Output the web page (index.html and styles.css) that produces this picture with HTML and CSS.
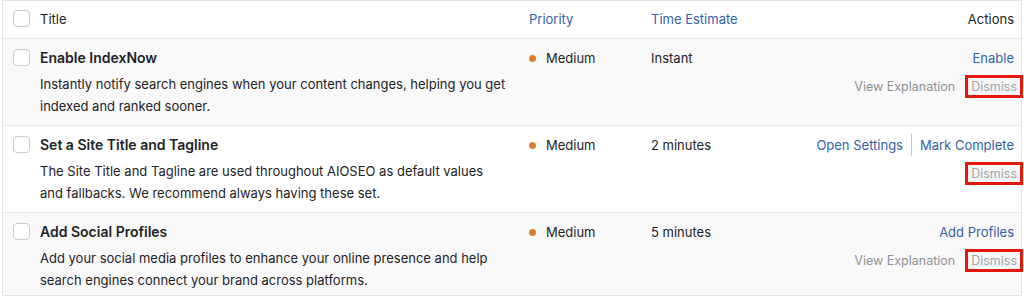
FILE: index.html
```html
<!DOCTYPE html>
<html>
<head>
<meta charset="utf-8">
<link rel="stylesheet" href="styles.css">
</head>
<body>
<div class="table">
  <div class="row head">
    <div class="c-check"><span class="cb"></span></div>
    <div class="c-title">Title</div>
    <div class="c-prio link">Priority</div>
    <div class="c-time link">Time Estimate</div>
    <div class="c-act">Actions</div>
  </div>

  <div class="row alt">
    <div class="c-check"><span class="cb"></span></div>
    <div class="c-title">
      <div class="t">Enable IndexNow</div>
      <div class="d">Instantly notify search engines when your content changes, helping you get indexed and ranked sooner.</div>
    </div>
    <div class="c-prio"><span class="dot"></span>Medium</div>
    <div class="c-time">Instant</div>
    <div class="c-act">
      <div class="a1"><span class="link">Enable</span></div>
      <div class="a2"><span class="muted">View Explanation</span><span class="dismiss">Dismiss</span></div>
    </div>
  </div>

  <div class="row">
    <div class="c-check"><span class="cb"></span></div>
    <div class="c-title">
      <div class="t">Set a Site Title and Tagline</div>
      <div class="d">The Site Title and Tagline are used throughout AIOSEO as default values and fallbacks. We recommend always having these set.</div>
    </div>
    <div class="c-prio"><span class="dot"></span>Medium</div>
    <div class="c-time">2 minutes</div>
    <div class="c-act">
      <div class="a1"><span class="link">Open Settings</span><span class="sep"></span><span class="link">Mark Complete</span></div>
      <div class="a2"><span class="dismiss">Dismiss</span></div>
    </div>
  </div>

  <div class="row alt last">
    <div class="c-check"><span class="cb"></span></div>
    <div class="c-title">
      <div class="t">Add Social Profiles</div>
      <div class="d">Add your social media profiles to enhance your online presence and help search engines connect your brand across platforms.</div>
    </div>
    <div class="c-prio"><span class="dot"></span>Medium</div>
    <div class="c-time">5 minutes</div>
    <div class="c-act">
      <div class="a1"><span class="link">Add Profiles</span></div>
      <div class="a2"><span class="muted">View Explanation</span><span class="dismiss">Dismiss</span></div>
    </div>
  </div>
</div>
</body>
</html>
```

FILE: styles.css
```css
* { box-sizing: border-box; }
html, body { margin: 0; padding: 0; background: #fff; }
body {
  font-family: Inter, "Liberation Sans", Arial, sans-serif;
  font-size: 13px;
  color: #1d2327;
}
.table {
  margin: 0 0 0 2px;
  width: 1020px;
  border: 1px solid #e2e4e7;
}
.row {
  display: grid;
  grid-template-columns: 37px 489px 122px 1fr auto;
  padding: 8px 7px 8px 0;
  border-top: 1px solid #e8e8ea;
  line-height: 22px;
}
.row.head {
  border-top: none;
  padding: 7px 7px 8px 0;
}
.row.last { padding-bottom: 4px; }
.row.alt { background: #f9f9f9; }
.c-check { display: flex; justify-content: flex-end; padding-right: 10px; padding-top: 2px; }
.cb {
  display: block;
  width: 17px;
  height: 17px;
  border: 1px solid #c8cacd;
  border-radius: 4px;
  background: #fff;
}
.t { font-weight: 600; font-size: 14px; }
.d { margin-top: 4px; width: 467px; }
.c-title { padding-right: 8px; }
.link { color: #3063a6; }
.muted { color: #8d9196; }
.c-prio { display: flex; align-items: flex-start; }
.dot {
  width: 7px;
  height: 7px;
  border-radius: 50%;
  background: #d7802f;
  margin: 8px 10px 0 0;
  flex: none;
}
.c-act { text-align: right; }
.a1 { display: flex; justify-content: flex-end; align-items: center; }
.sep {
  display: inline-block;
  width: 1px;
  height: 22px;
  background: #c3c5c9;
  margin: 0 8px;
}
.a2 {
  margin-top: 9px;
  display: flex;
  justify-content: flex-end;
  align-items: center;
  font-size: 12.5px;
  line-height: 15px;
}
.dismiss {
  color: #a2a5aa;
  padding: 1px 3px;
  outline: 3px solid #e3170b;
  background: #f7f7f7;
  margin-left: 13px;
  margin-right: -6px;
}
```
